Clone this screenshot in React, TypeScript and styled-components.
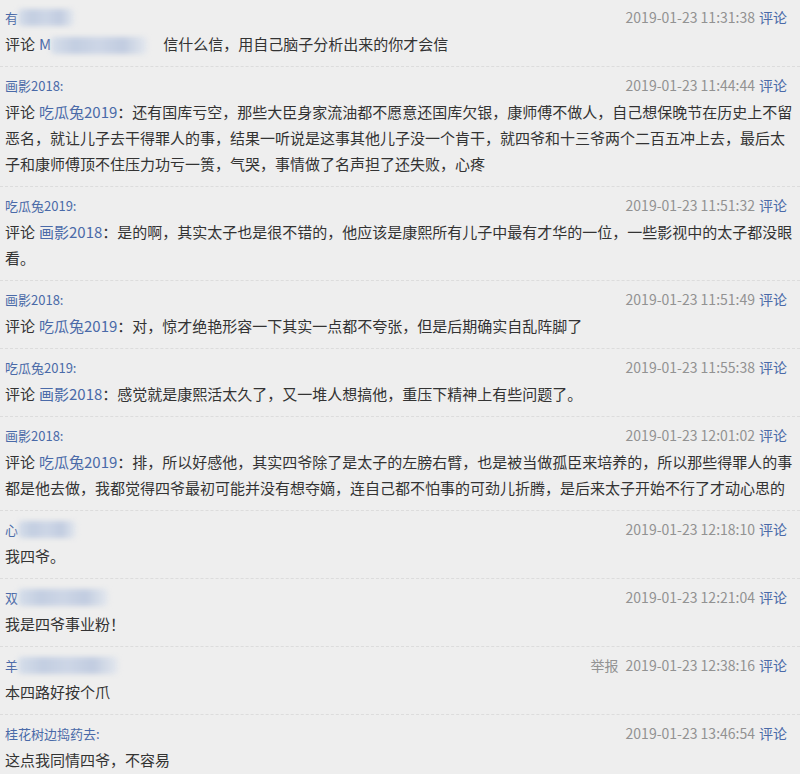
import React from "react";
import styled, { createGlobalStyle } from "styled-components";

const GlobalStyle = createGlobalStyle`
    html, body {
        margin: 0;
        padding: 0;
        overflow: hidden;
        background: #eeeeee;
    }
    body {
        font-family: "Noto Sans CJK SC", "Microsoft YaHei", sans-serif;
        color: #333;
    }
`;

const List = styled.div`
    margin-top: -1px;
`;

const Item = styled.div`
    padding: 8px 5px 9px 5px;
    border-bottom: 1px dashed #dcdcdc;
`;

const Head = styled.div`
    display: flex;
    align-items: center;
    justify-content: space-between;
    height: 20px;
    margin-bottom: 4px;
`;

const Name = styled.span`
    display: flex;
    align-items: center;
    font-size: 13px;
    color: #4a6aa8;
`;

const Meta = styled.span`
    font-size: 14px;
    color: #929292;
    margin-right: 8px;
    white-space: nowrap;
`;

const Report = styled.span`
    margin-right: 7px;
`;

const Link = styled.span`
    color: #4a6aa8;
    margin-left: 4px;
`;

const Body = styled.div`
    font-size: 15px;
    line-height: 26px;
    color: #333;
    word-break: break-all;
`;

const At = styled.span`
    color: #4a6aa8;
    margin-left: 4px;
`;

const Blur = styled.span<{ $w: number }>`
    display: inline-block;
    width: ${(p) => p.$w}px;
    height: 17px;
    vertical-align: middle;
    background: linear-gradient(90deg, #d6deea 0%, #c3cee1 25%, #cdd6e6 50%, #c1cce0 75%, #e4e8ee 100%);
    filter: blur(2.5px);
    border-radius: 4px;
`;

const Gap = styled.span`
    display: inline-block;
    width: 16px;
`;

type Entry = {
    name: string;
    blur?: number;
    time: string;
    report?: boolean;
    reply?: string;
    replyBlur?: number;
    text: string;
};

const entries: Entry[] = [
    {
        name: "有",
        blur: 56,
        time: "2019-01-23 11:31:38",
        reply: "M",
        replyBlur: 96,
        text: "信什么信，用自己脑子分析出来的你才会信",
    },
    {
        name: "画影2018:",
        time: "2019-01-23 11:44:44",
        reply: "吃瓜兔2019",
        text: "：还有国库亏空，那些大臣身家流油都不愿意还国库欠银，康师傅不做人，自己想保晚节在历史上不留恶名，就让儿子去干得罪人的事，结果一听说是这事其他儿子没一个肯干，就四爷和十三爷两个二百五冲上去，最后太子和康师傅顶不住压力功亏一篑，气哭，事情做了名声担了还失败，心疼",
    },
    {
        name: "吃瓜兔2019:",
        time: "2019-01-23 11:51:32",
        reply: "画影2018",
        text: "：是的啊，其实太子也是很不错的，他应该是康熙所有儿子中最有才华的一位，一些影视中的太子都没眼看。",
    },
    {
        name: "画影2018:",
        time: "2019-01-23 11:51:49",
        reply: "吃瓜兔2019",
        text: "：对，惊才绝艳形容一下其实一点都不夸张，但是后期确实自乱阵脚了",
    },
    {
        name: "吃瓜兔2019:",
        time: "2019-01-23 11:55:38",
        reply: "画影2018",
        text: "：感觉就是康熙活太久了，又一堆人想搞他，重压下精神上有些问题了。",
    },
    {
        name: "画影2018:",
        time: "2019-01-23 12:01:02",
        reply: "吃瓜兔2019",
        text: "：排，所以好感他，其实四爷除了是太子的左膀右臂，也是被当做孤臣来培养的，所以那些得罪人的事都是他去做，我都觉得四爷最初可能并没有想夺嫡，连自己都不怕事的可劲儿折腾，是后来太子开始不行了才动心思的",
    },
    { name: "心", blur: 58, time: "2019-01-23 12:18:10", text: "我四爷。" },
    { name: "双", blur: 90, time: "2019-01-23 12:21:04", text: "我是四爷事业粉！" },
    { name: "羊", blur: 100, time: "2019-01-23 12:38:16", report: true, text: "本四路好按个爪" },
    { name: "桂花树边捣药去:", time: "2019-01-23 13:46:54", text: "这点我同情四爷，不容易" },
];

function Comment({ e }: { e: Entry }) {
    return (
        <Item>
            <Head>
                <Name>
                    {e.name}
                    {e.blur && <Blur $w={e.blur} />}
                </Name>
                <Meta>
                    {e.report && <Report>举报</Report>}
                    {e.time}
                    <Link>评论</Link>
                </Meta>
            </Head>
            <Body>
                {e.reply && (
                    <>
                        评论<At>{e.reply}</At>
                        {e.replyBlur && (
                            <>
                                <Blur $w={e.replyBlur} />
                                <Gap />
                            </>
                        )}
                    </>
                )}
                {e.text}
            </Body>
        </Item>
    );
}

export default function App() {
    return (
        <>
            <GlobalStyle />
            <List>
                {entries.map((e, i) => (
                    <Comment key={i} e={e} />
                ))}
            </List>
        </>
    );
}
